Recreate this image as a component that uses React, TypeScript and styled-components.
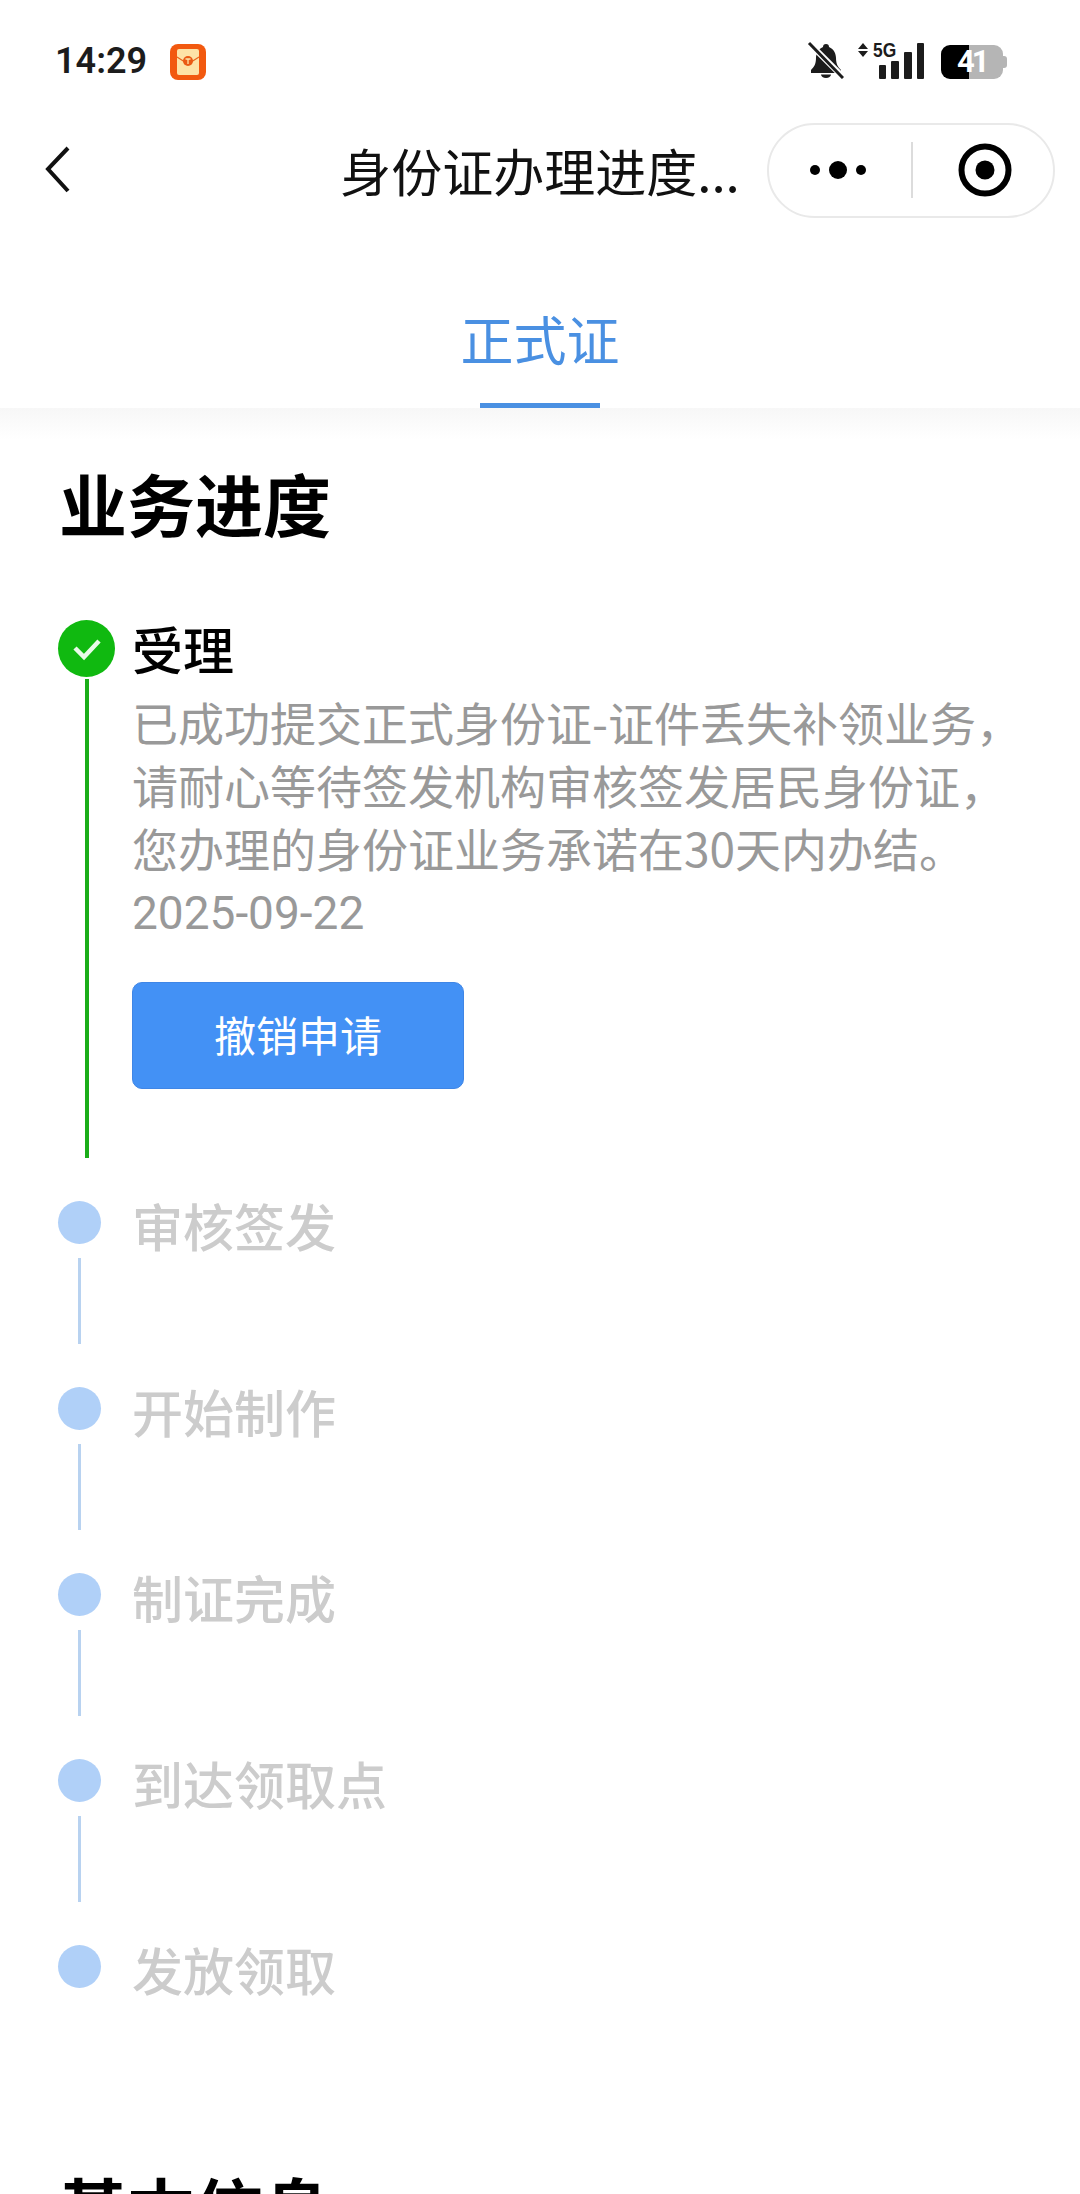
import React from 'react';
import styled, {createGlobalStyle} from 'styled-components';

const FONT = `Roboto, "Noto Sans CJK SC", "Noto Sans", sans-serif`;

const GlobalStyle = createGlobalStyle`
  html, body {
    margin: 0;
    padding: 0;
    background: #fff;
  }
  body {
    font-family: "Noto Sans CJK SC", "Noto Sans", sans-serif;
  }
`;

const Page = styled.div`
  width: 1080px;
  height: 2194px;
  overflow: hidden;
  background: #fff;
`;

const StatusBar = styled.div`
  height: 120px;
  box-sizing: border-box;
  padding: 41px 73px 0 55px;
  display: flex;
  align-items: flex-start;
`;

const Time = styled.span`
  font-family: ${FONT};
  font-size: 36px;
  line-height: 40px;
  font-weight: 600;
  color: #1c1c1c;
`;

const AppBadge = styled.svg`
  margin: 3px 0 0 23px;
`;

const StatusIcons = styled.div`
  margin-left: auto;
  display: flex;
  align-items: flex-start;
`;

const SignalWrap = styled.div`
  position: relative;
  width: 68px;
  height: 38px;
  margin-left: 12px;
`;

const FiveG = styled.span`
  position: absolute;
  left: 17px;
  top: -1px;
  font-family: "Liberation Sans", sans-serif;
  font-size: 20px;
  line-height: 20px;
  font-weight: 700;
  color: #1c1c1c;
  transform: scaleX(0.87);
  transform-origin: left top;
`;

const Battery = styled.div`
  position: relative;
  width: 66px;
  height: 34px;
  margin: 4px 0 0 17px;
`;

const BatteryBody = styled.div`
  width: 62px;
  height: 34px;
  border-radius: 9px;
  overflow: hidden;
  display: flex;
`;

const BatteryFill = styled.div<{$width: number; $color: string}>`
  width: ${({$width}) => $width}px;
  background: ${({$color}) => $color};
`;

const BatteryNub = styled.div`
  position: absolute;
  right: 0;
  top: 11px;
  width: 4px;
  height: 12px;
  border-radius: 0 3px 3px 0;
  background: #b5b5b5;
`;

const BatteryText = styled.span`
  position: absolute;
  left: 16px;
  top: 2px;
  font-family: Roboto, sans-serif;
  font-size: 31px;
  line-height: 30px;
  font-weight: 700;
  letter-spacing: -3px;
  color: #fff;
`;

const NavBar = styled.div`
  height: 100px;
  display: grid;
  grid-template-columns: 1fr auto 1fr;
  align-items: center;
`;

const BackButton = styled.div`
  padding-left: 45px;
  display: flex;
  align-items: center;
`;

const NavTitle = styled.div`
  font-size: 51px;
  line-height: 60px;
  color: #111;
  white-space: nowrap;
`;

const CapsuleSlot = styled.div`
  display: flex;
  justify-content: flex-end;
  padding-right: 25px;
`;

const Capsule = styled.div`
  width: 288px;
  height: 95px;
  box-sizing: border-box;
  border: 2px solid #e9e9e9;
  border-radius: 48px;
  display: flex;
  align-items: center;
  background: #fff;
`;

const CapsuleHalf = styled.div<{$width: number; $left?: number; $right?: number}>`
  width: ${({$width}) => $width}px;
  box-sizing: border-box;
  padding: 0 ${({$right}) => $right || 0}px 0 ${({$left}) => $left || 0}px;
  display: flex;
  align-items: center;
  justify-content: center;
`;

const CapsuleDivider = styled.div`
  width: 2px;
  height: 56px;
  background: #dcdcdc;
`;

const TabBar = styled.div`
  height: 188px;
  display: flex;
  justify-content: center;
  align-items: flex-end;
`;

const Tab = styled.div`
  width: 120px;
  height: 101px;
  box-sizing: border-box;
  border-bottom: 5px solid #4a90e2;
  display: flex;
  justify-content: center;
  font-size: 53px;
  line-height: 62px;
  color: #4a90e2;
  white-space: nowrap;
`;

const Band = styled.div`
  height: 32px;
  background: linear-gradient(#f7f7f7, #fff);
`;

const Section = styled.section`
  padding: 23px 0 0 59px;
`;

const SectionTitle = styled.h2`
  margin: 0;
  font-size: 68px;
  line-height: 80px;
  font-weight: 700;
  color: #000;
`;

const Timeline = styled.div`
  margin: 77px 0 0 -1px;
  display: flex;
  flex-direction: column;
`;

const Step = styled.div`
  display: flex;
  align-items: flex-start;
  padding-bottom: 43px;
`;

const MarkerColumn = styled.div`
  width: 74px;
  flex: none;
  display: flex;
  flex-direction: column;
`;

const DoneDot = styled.div`
  width: 57px;
  height: 57px;
  border-radius: 50%;
  background: #10b910;
  display: flex;
  align-items: center;
  justify-content: center;
`;

const DoneLine = styled.div`
  width: 4px;
  height: 479px;
  margin: 2px 0 0 27px;
  background: #1aad19;
`;

const PendingDot = styled.div`
  width: 43px;
  height: 43px;
  border-radius: 50%;
  background: #b0d0f8;
`;

const PendingLine = styled.div`
  width: 3px;
  height: 86px;
  margin: 14px 0 0 20px;
  background: #b8d2f0;
`;

const StepBody = styled.div`
  min-width: 0;
`;

const DoneLabel = styled.div`
  font-size: 51px;
  line-height: 56px;
  font-weight: 500;
  color: #000;
`;

const PendingLabel = styled.div`
  font-size: 51px;
  line-height: 48px;
  font-weight: 500;
  color: #ccc;
`;

const Description = styled.div`
  margin-top: 14px;
  font-size: 46px;
  line-height: 63px;
  color: #999;
  white-space: nowrap;
`;

const DateText = styled.div`
  margin-top: 3px;
  font-family: ${FONT};
  font-size: 46px;
  line-height: 63px;
  color: #999;
`;

const CancelButton = styled.button`
  display: block;
  width: 332px;
  height: 107px;
  margin: 37px 0 0 0;
  padding: 0 0 3px;
  border: 1px solid #3f86e6;
  border-radius: 10px;
  background: #4391f5;
  color: #fff;
  font-family: inherit;
  font-size: 42px;
  line-height: 60px;
`;

const NextSection = styled.section`
  padding: 0 0 0 59px;
  margin-top: 131px;
`;

const BellOff = () => (
  <svg width="38" height="38" viewBox="0 0 38 38">
    <path
      d="M20 3a3 3 0 0 1 3 3c5 2 7 7 7 11 0 6 2 9 5 12v3H5v-3c3-3 5-6 5-12 0-4 2-9 7-11a3 3 0 0 1 3-3z"
      fill="#1c1c1c"
    />
    <path d="M15 33.5h10a5 3.5 0 0 1-10 0z" fill="#1c1c1c" />
    <path d="M1 0l36 36" stroke="#fff" strokeWidth="6" />
    <path d="M3 2l34 35" stroke="#1c1c1c" strokeWidth="3" />
  </svg>
);

const SignalBars = () => (
  <svg width="68" height="38" viewBox="0 0 68 38">
    <path d="M7 2l5 6H2z M7 16l5-6H2z" fill="#1c1c1c" />
    <rect x="23" y="24" width="7" height="14" rx="1" fill="#1c1c1c" />
    <rect x="35" y="20" width="8" height="18" rx="1" fill="#1c1c1c" />
    <rect x="48" y="11" width="8" height="27" rx="1" fill="#1c1c1c" />
    <rect x="61" y="2" width="7" height="36" rx="1" fill="#1c1c1c" />
  </svg>
);

const RedPacket = () => (
  <AppBadge width="36" height="36" viewBox="0 0 36 36">
    <rect width="36" height="36" rx="8" fill="#f2590f" />
    <rect x="7" y="5" width="22" height="26" rx="2" fill="#fde3a7" />
    <path d="M7 13l11 7 11-7" fill="none" stroke="#e8641c" strokeWidth="1.2" />
    <circle cx="18" cy="17" r="5" fill="#ea5a14" />
    <path d="M15.5 15h5M18 15v5" stroke="#fde3a7" strokeWidth="1.3" />
  </AppBadge>
);

const Check = () => (
  <svg width="30" height="24" viewBox="0 0 30 24">
    <path d="M3 11l9 9L27 4" fill="none" stroke="#e9fbe9" strokeWidth="4.5" />
  </svg>
);

const STEPS = ['审核签发', '开始制作', '制证完成', '到达领取点', '发放领取'];

const App = () => {
  return (
    <Page>
      <GlobalStyle />
      <StatusBar>
        <Time>14:29</Time>
        <RedPacket />
        <StatusIcons>
          <BellOff />
          <SignalWrap>
            <SignalBars />
            <FiveG>5G</FiveG>
          </SignalWrap>
          <Battery>
            <BatteryBody>
              <BatteryFill $width={28} $color="#000" />
              <BatteryFill $width={34} $color="#b5b5b5" />
            </BatteryBody>
            <BatteryNub />
            <BatteryText>41</BatteryText>
          </Battery>
        </StatusIcons>
      </StatusBar>

      <NavBar>
        <BackButton>
          <svg width="26" height="48" viewBox="0 0 26 48">
            <path d="M23 2L3 23l20 22" fill="none" stroke="#111" strokeWidth="4" />
          </svg>
        </BackButton>
        <NavTitle>身份证办理进度...</NavTitle>
        <CapsuleSlot>
          <Capsule>
            <CapsuleHalf $width={142} $right={4}>
              <svg width="56" height="20" viewBox="0 0 56 20">
                <circle cx="5" cy="10" r="5" fill="#000" />
                <circle cx="28" cy="10" r="9" fill="#000" />
                <circle cx="51" cy="10" r="5" fill="#000" />
              </svg>
            </CapsuleHalf>
            <CapsuleDivider />
            <CapsuleHalf $width={140} $left={4}>
              <svg width="54" height="54" viewBox="0 0 54 54">
                <circle cx="27" cy="27" r="23.5" fill="none" stroke="#000" strokeWidth="6" />
                <circle cx="27" cy="27" r="9.5" fill="#000" />
              </svg>
            </CapsuleHalf>
          </Capsule>
        </CapsuleSlot>
      </NavBar>

      <TabBar>
        <Tab>正式证</Tab>
      </TabBar>
      <Band />

      <Section>
        <SectionTitle>业务进度</SectionTitle>
        <Timeline>
          <Step>
            <MarkerColumn>
              <DoneDot>
                <Check />
              </DoneDot>
              <DoneLine />
            </MarkerColumn>
            <StepBody>
              <DoneLabel>受理</DoneLabel>
              <Description>
                已成功提交正式身份证-证件丢失补领业务，
                <br />
                请耐心等待签发机构审核签发居民身份证，
                <br />
                您办理的身份证业务承诺在30天内办结。
              </Description>
              <DateText>2025-09-22</DateText>
              <CancelButton>撤销申请</CancelButton>
            </StepBody>
          </Step>
          {STEPS.map((label, index) => (
            <Step key={label}>
              <MarkerColumn>
                <PendingDot />
                {index < STEPS.length - 1 && <PendingLine />}
              </MarkerColumn>
              <StepBody>
                <PendingLabel>{label}</PendingLabel>
              </StepBody>
            </Step>
          ))}
        </Timeline>
      </Section>

      <NextSection>
        <SectionTitle>基本信息</SectionTitle>
      </NextSection>
    </Page>
  );
};

export default App;
